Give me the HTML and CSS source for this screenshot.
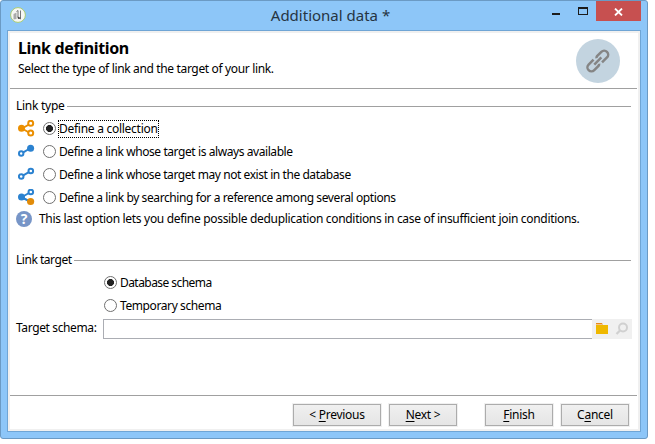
FILE: index.html
```html
<!DOCTYPE html>
<html lang="en">
<head>
<meta charset="utf-8">
<title>Additional data *</title>
<link rel="stylesheet" href="styles.css">
</head>
<body>
<div class="window">
  <div class="titlebar">
    <svg class="app-icon" width="16" height="16" viewBox="0 0 16 16"><circle cx="8" cy="8" r="7.4" fill="#f7f7f4" stroke="#a8cc72"/><path d="M3.500 7 6.500 5.500V12L3.500 12.500Z" fill="#aaa"/><path d="M6.500 4.500 8 3.500v7l2.500 1.500V3.500" fill="none" stroke="#777"/><path d="M7.500 9.500 11 11l-3 1z" fill="#444"/></svg>
    <div class="title">Additional data *</div>
    <div class="controls">
      <svg class="min-max" width="44" height="20" viewBox="0 0 44 20"><path d="M2 12h8v2H2z" fill="#1c1c1c"/><path d="M28 6h10v8H28z M29 8h8v5H29z" fill="#1c1c1c" fill-rule="evenodd"/></svg>
      <div class="close"><svg width="9" height="8" viewBox="0 0 9 8"><path d="M1 .6 8 7.4M8 .6 1 7.4" stroke="#fff" stroke-width="1.9"/></svg></div>
    </div>
  </div>
  <div class="frame">
    <div class="page">
      <header class="header">
        <div>
          <h1>Link definition</h1>
          <p class="subtitle">Select the type of link and the target of your link.</p>
        </div>
        <svg class="badge" width="44" height="44" viewBox="0 0 44 44"><circle cx="22" cy="22" r="22" fill="#c3d4e0"/><g transform="translate(21.8 22) rotate(-45)" fill="none" stroke="#858585" stroke-width="2.5"><path d="M-2-4H-9a4 4 0 0 0 0 8h6a3 3 0 0 0 2-1.200M2 4H9a4 4 0 0 0 0-8H3a3 3 0 0 0-2 1.200M-5 0H5"/></g></svg>
      </header>
      <main class="content">
        <div class="legend legend-type"><span>Link type</span><i></i></div>
        <div class="options">
          <div class="option"><svg width="18" height="18" viewBox="0 0 18 18" fill="none" stroke="#eb8f00" stroke-width="2"><path d="M4 8.500l7-4M4 8.500l7 4"/><circle cx="12.700" cy="3.200" r="2.500"/><circle cx="12.700" cy="13" r="2.500"/><circle cx="3.500" cy="8.300" r="3.500" fill="#eb8f00" stroke="none"/></svg><b class="radio checked"></b><span class="focused">Define a collection</span></div>
          <div class="option"><svg width="18" height="18" viewBox="0 0 18 18" fill="none" stroke="#2b82d0" stroke-width="2"><path d="M5.300 9.300 11 6"/><circle cx="3.200" cy="10.500" r="2.200"/><circle cx="12.600" cy="5.200" r="3.500" fill="#2b82d0" stroke="none"/></svg><b class="radio"></b><span class="t2">Define a link whose target is always available</span></div>
          <div class="option"><svg width="18" height="18" viewBox="0 0 18 18" fill="none" stroke="#2b82d0" stroke-width="2"><path d="M5.300 9.300 10.800 6.200"/><circle cx="3.200" cy="10.500" r="2.300"/><circle cx="12.800" cy="5" r="2.300"/></svg><b class="radio"></b><span class="t3">Define a link whose target may not exist in the database</span></div>
          <div class="option"><svg width="18" height="18" viewBox="0 0 18 18" fill="none" stroke="#2b82d0" stroke-width="2"><path d="M4 8l7-4M4 8.500l6 3"/><circle cx="12.800" cy="3" r="2.300"/><circle cx="3.500" cy="8" r="3.500" fill="#2b82d0" stroke="none"/><circle cx="12.600" cy="12.500" r="3.600" fill="#e18b09" stroke="none"/></svg><b class="radio"></b><span class="t4">Define a link by searching for a reference among several options</span></div>
        </div>
        <div class="hint"><i class="help">?</i><span>This last option lets you define possible deduplication conditions in case of insufficient join conditions.</span></div>
        <div class="legend legend-target"><span>Link target</span><i></i></div>
        <div class="targets">
          <div class="option"><b class="radio checked"></b><span class="database">Database schema</span></div>
          <div class="option"><b class="radio"></b><span class="temporary">Temporary schema</span></div>
        </div>
        <div class="field">
          <label for="schema">Target schema:</label>
          <input id="schema" type="text">
          <div class="tool"><svg width="20" height="20" viewBox="0 0 20 20"><path d="M4 4h6l1 2H4z" fill="#e58a1c"/><path d="M4 5h7v1h5v9H4z" fill="#efb800"/><path d="M4 5h7v1H4z" fill="#f3c18d"/></svg></div>
          <div class="tool"><svg width="20" height="20" viewBox="0 0 20 20" fill="none" stroke="#d0d0d0" stroke-width="2"><circle cx="11" cy="8.500" r="4"/><path d="M8 11.500 4.500 15" stroke-width="2.300"/></svg></div>
        </div>
      </main>
      <footer class="footer">
        <button class="wide">&lt; <u>P</u>revious</button>
        <button class="next"><u>N</u>ext &gt;</button>
        <button class="finish"><u>F</u>inish</button>
        <button>C<u>a</u>ncel</button>
      </footer>
    </div>
  </div>
</div>
</body>
</html>
```
FILE: styles.css
```css
* { box-sizing: border-box; }
body {
  margin: 0;
  background: #fff;
  color: #000;
  font: 12px/16px "Noto Sans", "Open Sans", sans-serif;
  letter-spacing: -0.27px;
}
.window {
  display: flex;
  flex-direction: column;
  width: 648px;
  height: 439px;
  padding: 0 6px 6px;
  background: #8dc6f8;
  border: 1px solid #6b9ac4;
  border-radius: 3px;
}
.titlebar { display: flex; height: 29px; flex: none; }
.app-icon { margin: 6px 0 0 3px; }
.title {
  flex: 1;
  padding: 4px 0 0 85px;
  text-align: center;
  font-size: 15px;
  line-height: 21px;
  letter-spacing: 0;
  color: #263442;
}
.controls { display: flex; }
.min-max { margin-right: 2px; }
.close {
  display: flex;
  align-items: center;
  justify-content: center;
  width: 45px;
  height: 20px;
  padding-top: 1px;
  background: #c75050;
}
.frame {
  flex: 1;
  padding: 2px;
  background: #f0f0f0;
  border: 1px solid #6fa5d5;
}
.page {
  display: flex;
  flex-direction: column;
  height: 100%;
  background: #fff;
}
.header {
  display: flex;
  justify-content: space-between;
  height: 56px;
  margin-right: 1px;
  padding: 6px 17px 0 8px;
  border-bottom: 1px solid #a0a0a0;
}
h1 {
  margin: 0;
  font-size: 16px;
  line-height: 19px;
  letter-spacing: -0.35px;
}
.subtitle { margin: 3px 0 0; letter-spacing: -0.35px; }
.content { flex: 1; padding: 9px 6px 0; }
.legend { display: flex; align-items: center; height: 16px; margin-right: 1px; }
.legend i { flex: 1; height: 1px; margin-left: 2px; background: #a0a0a0; }
.options { padding: 3px 0 0 2px; }
.option { display: flex; align-items: center; height: 23px; }
.option > svg { margin-right: 7px; flex: none; }
.radio {
  flex: none;
  width: 13px;
  height: 13px;
  margin-right: 3px;
  border: 1px solid #707070;
  border-radius: 50%;
}
.radio.checked { background: radial-gradient(circle, #222 0 3.2px, #fff 3.8px); }
.focused { outline: 1px dotted #000; }
.t2 { letter-spacing: -0.42px; }
.t3 { letter-spacing: -0.43px; }
.t4 { letter-spacing: -0.4px; }
.hint { display: flex; align-items: center; height: 20px; letter-spacing: -0.315px; }
.help {
  width: 16px;
  height: 16px;
  margin-right: 7px;
  border-radius: 50%;
  background: #7795c7;
  color: #fff;
  font: bold 14px/16px "Open Sans", sans-serif;
  text-align: center;
}
.legend-target { margin-top: 23px; letter-spacing: -0.47px; }
.targets { padding: 3px 0 0 88px; }
.database { letter-spacing: -0.56px; }
.temporary { letter-spacing: -0.4px; }
.field { display: flex; margin-top: 2px; }
.field label { width: 87px; line-height: 18px; letter-spacing: -0.37px; }
.field input {
  flex: 1;
  min-width: 0;
  height: 20px;
  border: 1px solid #abadb3;
  border-right: 0;
  background: #fff;
}
.tool { width: 20px; height: 20px; background: #f0f0f0; }
.footer {
  display: flex;
  justify-content: flex-end;
  gap: 8px;
  height: 34px;
  margin-right: 1px;
  padding: 8px 8px 0 0;
  border-top: 1px solid #a0a0a0;
}
button {
  width: 68px;
  height: 22px;
  padding: 0;
  border: 1px solid #acacac;
  outline: 1px solid #f0f0f0;
  background: linear-gradient(#f0f0f0, #e5e5e5);
  font: inherit;
  letter-spacing: inherit;
  color: #000;
}
button u { text-underline-offset: 2px; }
.wide { width: 88px; }
.finish { margin-left: 20px; }
```
